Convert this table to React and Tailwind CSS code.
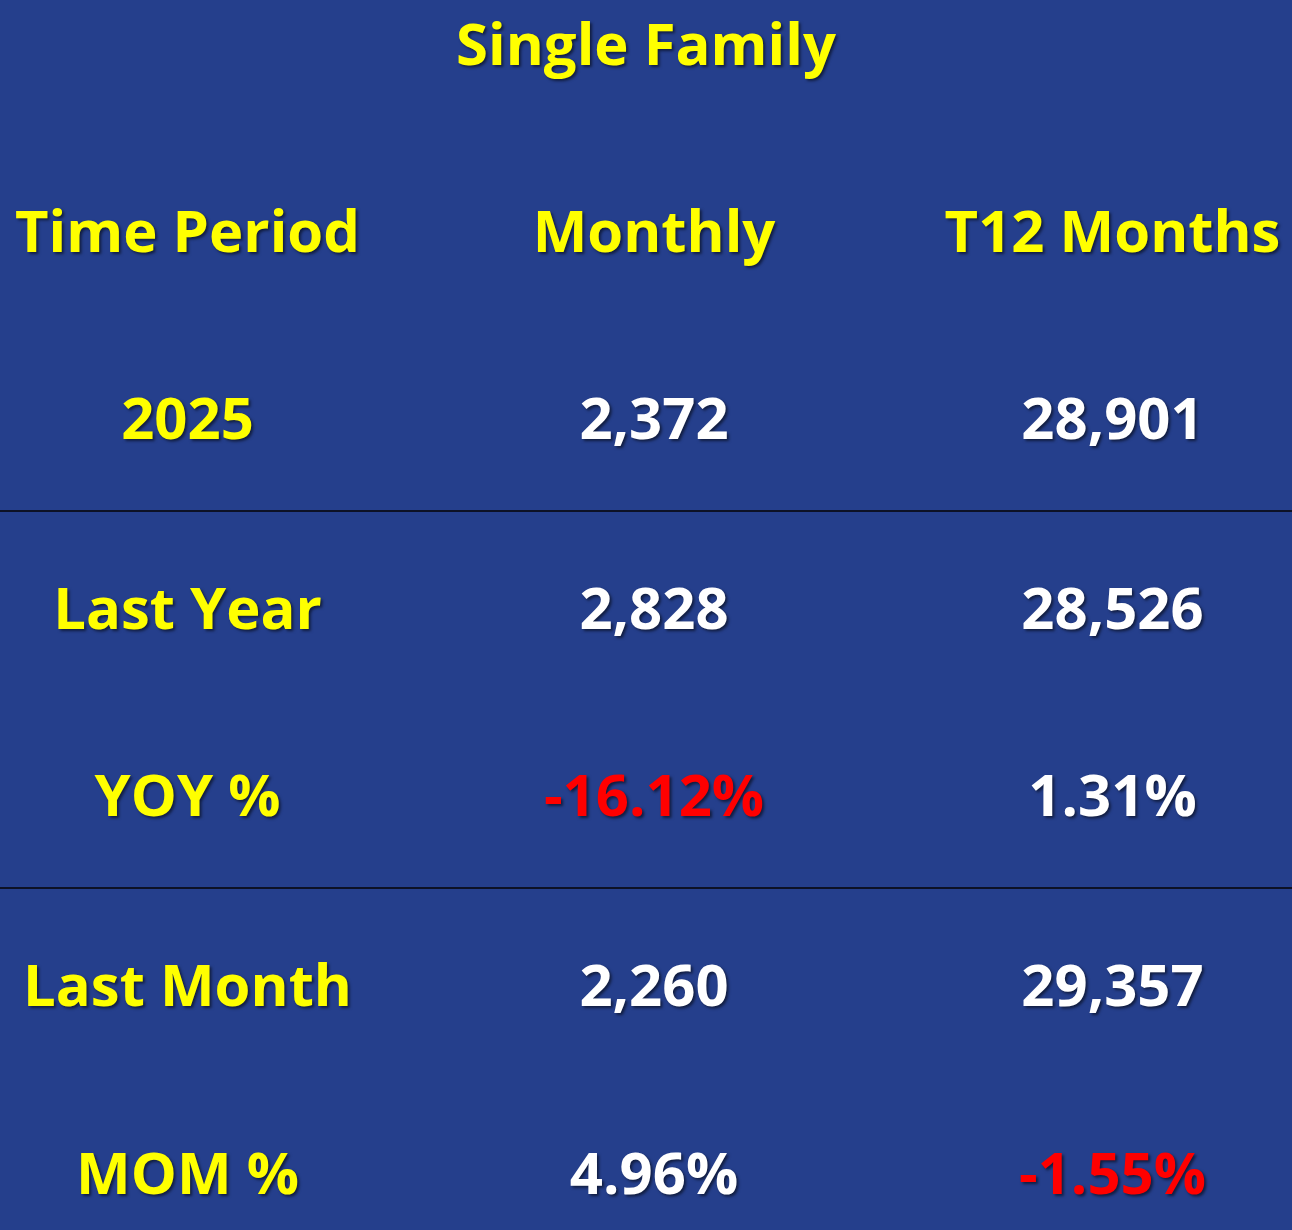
const rows = [
  { label: 'Time Period', monthly: 'Monthly', t12: 'T12 Months', header: true },
  { label: '2025', monthly: '2,372', t12: '28,901', border: true },
  { label: 'Last Year', monthly: '2,828', t12: '28,526' },
  { label: 'YOY %', monthly: '-16.12%', t12: '1.31%', monthlyNeg: true, border: true },
  { label: 'Last Month', monthly: '2,260', t12: '29,357' },
  { label: 'MOM %', monthly: '4.96%', t12: '-1.55%', t12Neg: true },
];

function Cell({ children, className = '' }) {
  return (
    <div className={`flex items-center justify-center ${className}`}>
      <span className="[text-shadow:2px_2px_3px_rgba(0,0,0,0.55)]">{children}</span>
    </div>
  );
}

export default function App() {
  return (
    <div className="h-[1230px] w-full overflow-hidden bg-[#253f8c] font-['Open_Sans',sans-serif] text-[58px] font-bold leading-normal">
      {/* Title */}
      <div className="h-[135px] text-center text-[#ffff00]">
        <span className="relative -top-[1px] [text-shadow:2px_2px_3px_rgba(0,0,0,0.55)]">Single Family</span>
      </div>

      {/* Table */}
      <div className="flex flex-col">
        {rows.map((r) => (
          <div
            key={r.label}
            className={`grid h-[188.5px] grid-cols-[375px_558px_1fr] ${r.border ? 'border-b-2 border-[#0d1226]' : ''}`}
          >
            <Cell className="text-[#ffff00]">{r.label}</Cell>
            <Cell className={r.header ? 'text-[#ffff00]' : r.monthlyNeg ? 'text-[#ff0000]' : 'text-white'}>
              {r.monthly}
            </Cell>
            <Cell className={r.header ? 'text-[#ffff00]' : r.t12Neg ? 'text-[#ff0000]' : 'text-white'}>
              {r.t12}
            </Cell>
          </div>
        ))}
      </div>
    </div>
  );
}
